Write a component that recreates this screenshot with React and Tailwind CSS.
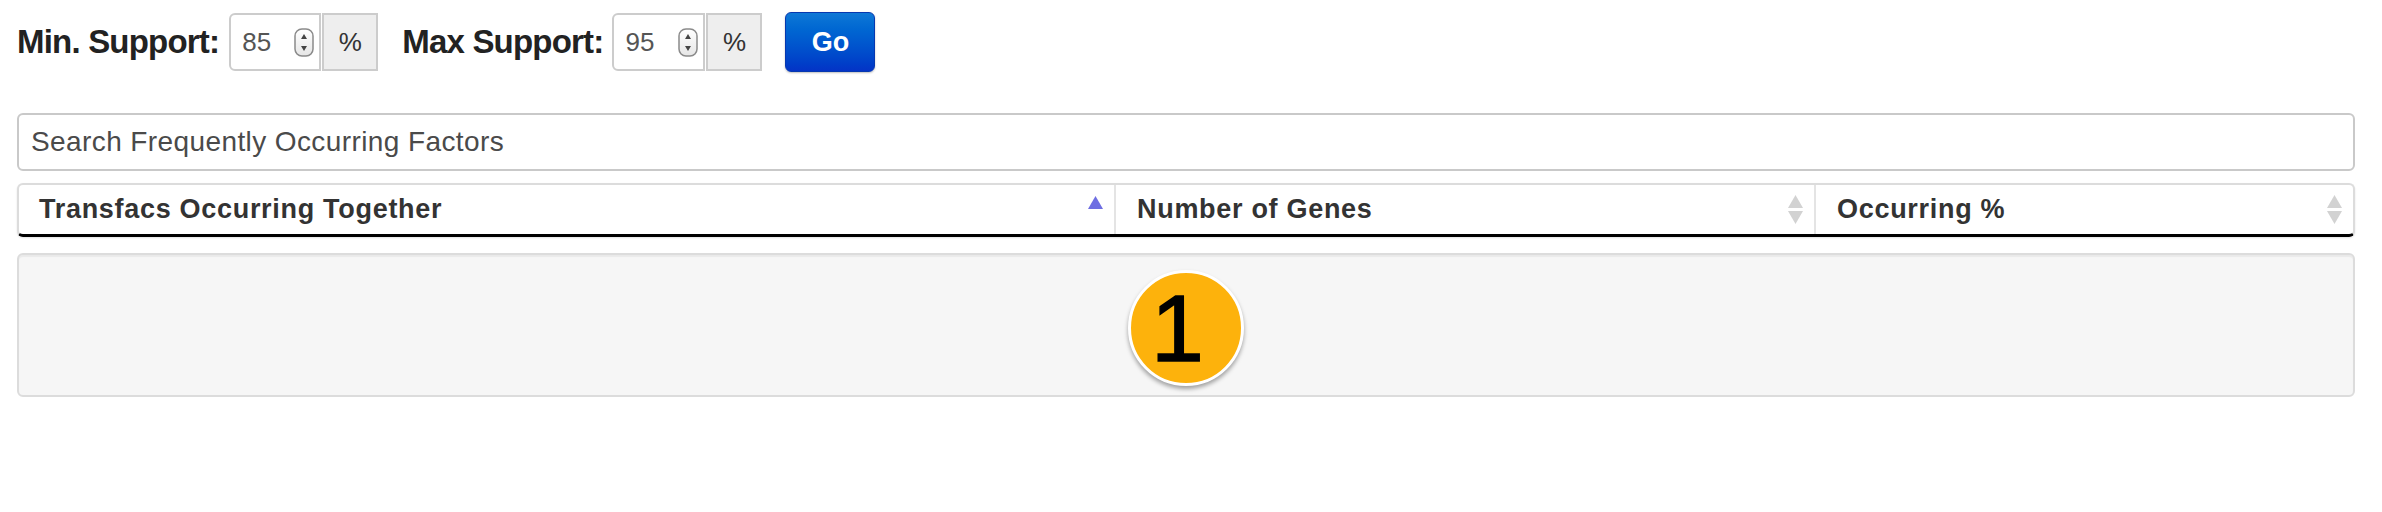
import React from "react";

const Spinner = () => (
  <svg width="20" height="29" viewBox="0 0 20 29" className="shrink-0">
    <defs>
      <linearGradient id="spg" x1="0" y1="0" x2="0" y2="1">
        <stop offset="0" stopColor="#ffffff" />
        <stop offset="1" stopColor="#e6e6e6" />
      </linearGradient>
    </defs>
    <rect x="1" y="1" width="18" height="27" rx="7" fill="url(#spg)" stroke="#8a8a8a" strokeWidth="1.5" />
    <path d="M10 6 L13 11 L7 11 Z" fill="#444" />
    <path d="M10 23 L13 18 L7 18 Z" fill="#444" />
  </svg>
);

const NumberField = ({ value, width }) => (
  <div className="flex items-center">
    <div
      className={`flex h-[58px] ${width} items-center justify-between rounded-l-[6px] border-2 border-[#cccccc] bg-white pl-[11px] pr-[5px]`}
    >
      <span className="text-[26px] text-[#555]">{value}</span>
      <Spinner />
    </div>
    <div className="ml-[1px] flex h-[58px] w-[56px] items-center justify-center border-2 border-[#cccccc] bg-[#eeeeee] text-[26px] text-[#333]">
      %
    </div>
  </div>
);

const SortUp = () => (
  <svg width="17" height="30" viewBox="0 0 17 30" className="shrink-0">
    <path d="M8.5 1 L16 14 L1 14 Z" fill="#6e6ee2" />
  </svg>
);

const SortBoth = () => (
  <svg width="17" height="30" viewBox="0 0 17 30" className="shrink-0">
    <path d="M8.5 0 L16 13 L1 13 Z" fill="#d2d2d2" />
    <path d="M8.5 29 L16 16 L1 16 Z" fill="#d2d2d2" />
  </svg>
);

const HeaderCell = ({ label, icon, first }) => (
  <div
    className={`flex items-center justify-between pr-[10px] ${
      first ? "pl-[20px]" : "border-l-2 border-[#e4e4e4] pl-[21px]"
    }`}
  >
    <span className="text-[27px] font-bold tracking-[0.7px] text-[#333]">{label}</span>
    {icon}
  </div>
);

export default function App() {
  return (
    <div className="min-h-[512px] bg-white pl-[17px] pr-[27px] pt-[12px] font-['Liberation_Sans',Arial,sans-serif]">
      <div className="flex items-center">
        <span className="text-[33px] font-bold tracking-[-0.8px] text-[#222]">Min. Support:</span>
        <div className="ml-[10px]">
          <NumberField value="85" width="w-[92px]" />
        </div>
        <span className="ml-[24px] text-[33px] font-bold tracking-[-0.8px] text-[#222]">Max Support:</span>
        <div className="ml-[9px]">
          <NumberField value="95" width="w-[93px]" />
        </div>
        <button className="ml-[23px] flex h-[60px] w-[90px] items-center justify-center rounded-[6px] border border-[#0638b0] bg-gradient-to-b from-[#0f78d6] to-[#0433c6] text-[27px] font-bold text-white shadow-[0_1px_2px_rgba(0,0,0,0.25)]">
          Go
        </button>
      </div>

      <div className="mt-[41px] flex h-[58px] items-center rounded-[6px] border-2 border-[#c9c9c9] bg-white pl-[12px] text-[28px] tracking-[0.4px] text-[#4a4a4a]">
        Search Frequently Occurring Factors
      </div>

      <div className="mt-[12px] grid h-[54px] grid-cols-[1095px_700px_1fr] rounded-[6px] border-x-2 border-t-2 border-b-[3px] border-x-[#dcdcdc] border-t-[#dcdcdc] border-b-black bg-white shadow-[0_1px_2px_rgba(0,0,0,0.12)]">
        <HeaderCell first label="Transfacs Occurring Together" icon={<SortUp />} />
        <HeaderCell label="Number of Genes" icon={<SortBoth />} />
        <HeaderCell label="Occurring %" icon={<SortBoth />} />
      </div>

      <div className="mt-[16px] flex h-[144px] items-center justify-center rounded-[6px] border-2 border-[#dcdcdc] bg-[#f6f6f6] shadow-[inset_0_2px_1px_rgba(0,0,0,0.05)]">
        <div className="mt-[6px] flex h-[116px] w-[116px] items-center justify-center rounded-full border-[3px] border-white bg-[#fdb20c] pr-[17px] shadow-[0_3px_4px_rgba(0,0,0,0.35)]">
          <span className="text-[95px] leading-none text-black [-webkit-text-stroke:1.5px_black]">1</span>
        </div>
      </div>
    </div>
  );
}
